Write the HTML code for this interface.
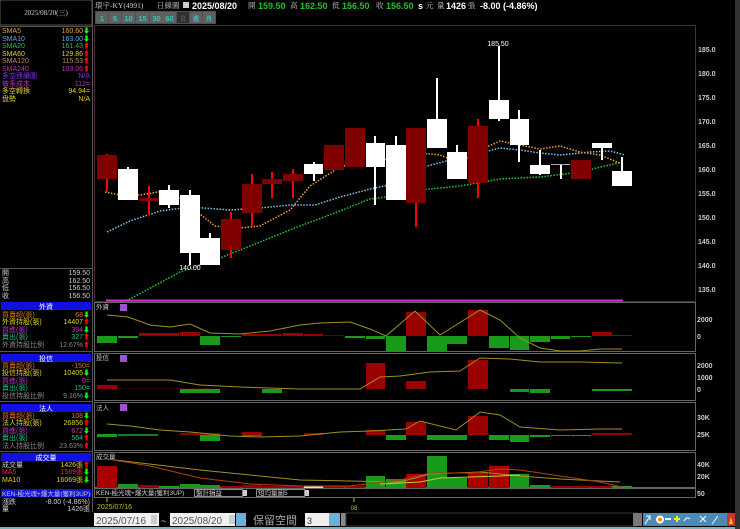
<!DOCTYPE html>
<html><head><meta charset="utf-8"><style>
html,body{margin:0;padding:0;background:#000;width:740px;height:529px;overflow:hidden}
svg{display:block}
text{font-family:"Liberation Sans","Noto Sans CJK TC",sans-serif}
.s{font-family:"Liberation Serif","Noto Serif CJK SC",serif}
</style></head><body>
<svg width="740" height="529" viewBox="0 0 740 529" xmlns="http://www.w3.org/2000/svg">
<rect width="740" height="529" fill="#000"/>
<!-- left panel borders -->
<rect x="0" y="0" width="92" height="25" fill="#000" stroke="#555" stroke-width="1"/>
<text x="46" y="15" font-size="7" fill="#ccc" text-anchor="middle" class="s">2025/08/20(三)</text>
<line x1="92.5" y1="0" x2="92.5" y2="512" stroke="#555"/>
<line x1="0" y1="26.5" x2="92" y2="26.5" stroke="#555"/>
<g font-size="7" class="s">
<text x="2" y="33" fill="#e8a040">SMA5</text><text x="90" y="33" fill="#e8a040" text-anchor="end">160.60<tspan fill="#0f0">⬇</tspan></text>
<text x="2" y="41" fill="#5ab0e0">SMA10</text><text x="90" y="41" fill="#5ab0e0" text-anchor="end">163.00<tspan fill="#0f0">⬇</tspan></text>
<text x="2" y="48" fill="#20c040">SMA20</text><text x="90" y="48" fill="#20c040" text-anchor="end">161.43<tspan fill="#f00">⬆</tspan></text>
<text x="2" y="56" fill="#e0d020">SMA60</text><text x="90" y="56" fill="#e0d020" text-anchor="end">129.86<tspan fill="#f00">⬆</tspan></text>
<text x="2" y="63" fill="#c09060">SMA120</text><text x="90" y="63" fill="#c09060" text-anchor="end">115.53<tspan fill="#f00">⬆</tspan></text>
<text x="2" y="71" fill="#c030c0">SMA240</text><text x="90" y="71" fill="#c030c0" text-anchor="end">103.06<tspan fill="#f00">⬆</tspan></text>
<text x="2" y="78" fill="#8030e0">多空連續圖</text><text x="90" y="78" fill="#8030e0" text-anchor="end">N/A</text>
<text x="2" y="86" fill="#c030c0">做多成本</text><text x="90" y="86" fill="#c030c0" text-anchor="end">112=</text>
<text x="2" y="93" fill="#e0d020">多空轉換</text><text x="90" y="93" fill="#e0d020" text-anchor="end">94.94=</text>
<text x="2" y="101" fill="#e0d020">盘勢</text><text x="90" y="101" fill="#e0d020" text-anchor="end">N/A</text>
</g>
<line x1="0" y1="268.5" x2="92" y2="268.5" stroke="#555"/>
<g font-size="7" fill="#ccc" class="s">
<text x="2" y="275">開</text><text x="90" y="275" text-anchor="end">159.50</text>
<text x="2" y="283">高</text><text x="90" y="283" text-anchor="end">162.50</text>
<text x="2" y="290">低</text><text x="90" y="290" text-anchor="end">156.50</text>
<text x="2" y="298">收</text><text x="90" y="298" text-anchor="end">156.50</text>
</g>
<!-- section headers -->
<g font-size="7" class="s">
<rect x="1" y="302" width="90" height="8" fill="#1010e0"/><text x="46" y="309" fill="#fff" text-anchor="middle">外資</text>
<text x="2" y="317" fill="#e07020">買賣超(張)</text><text x="90" y="317" fill="#e07020" text-anchor="end">68<tspan fill="#0f0">⬇</tspan></text>
<text x="2" y="324" fill="#e0d020">外資持股(張)</text><text x="90" y="324" fill="#e0d020" text-anchor="end">14407<tspan fill="#f00">⬆</tspan></text>
<text x="2" y="332" fill="#c030c0">買進(張)</text><text x="90" y="332" fill="#c030c0" text-anchor="end">394<tspan fill="#0f0">⬇</tspan></text>
<text x="2" y="339" fill="#20c080">賣出(張)</text><text x="90" y="339" fill="#20c080" text-anchor="end">327<tspan fill="#f00">⬆</tspan></text>
<text x="2" y="347" fill="#888">外資持股比例</text><text x="90" y="347" fill="#888" text-anchor="end">12.67%<tspan fill="#f00">⬆</tspan></text>
<line x1="0" y1="351.5" x2="92" y2="351.5" stroke="#555"/>
<rect x="1" y="354" width="90" height="8" fill="#1010e0"/><text x="46" y="361" fill="#fff" text-anchor="middle">投信</text>
<text x="2" y="368" fill="#e07020">買賣超(張)</text><text x="90" y="368" fill="#e07020" text-anchor="end">-150=</text>
<text x="2" y="375" fill="#e0d020">投信持股(張)</text><text x="90" y="375" fill="#e0d020" text-anchor="end">10405<tspan fill="#0f0">⬇</tspan></text>
<text x="2" y="383" fill="#c030c0">買進(張)</text><text x="90" y="383" fill="#c030c0" text-anchor="end">0=</text>
<text x="2" y="390" fill="#20c080">賣出(張)</text><text x="90" y="390" fill="#20c080" text-anchor="end">150=</text>
<text x="2" y="398" fill="#888">投信持股比例</text><text x="90" y="398" fill="#888" text-anchor="end">9.16%<tspan fill="#0f0">⬇</tspan></text>
<line x1="0" y1="401.5" x2="92" y2="401.5" stroke="#555"/>
<rect x="1" y="404" width="90" height="8" fill="#1010e0"/><text x="46" y="411" fill="#fff" text-anchor="middle">法人</text>
<text x="2" y="418" fill="#e07020">買賣超(張)</text><text x="90" y="418" fill="#e07020" text-anchor="end">108<tspan fill="#0f0">⬇</tspan></text>
<text x="2" y="425" fill="#e0d020">法人持股(張)</text><text x="90" y="425" fill="#e0d020" text-anchor="end">26856<tspan fill="#f00">⬆</tspan></text>
<text x="2" y="433" fill="#c030c0">買進(張)</text><text x="90" y="433" fill="#c030c0" text-anchor="end">672<tspan fill="#0f0">⬇</tspan></text>
<text x="2" y="440" fill="#20c080">賣出(張)</text><text x="90" y="440" fill="#20c080" text-anchor="end">564<tspan fill="#f00">⬆</tspan></text>
<text x="2" y="448" fill="#888">法人持股比例</text><text x="90" y="448" fill="#888" text-anchor="end">23.63%<tspan fill="#f00">⬆</tspan></text>
<line x1="0" y1="451.5" x2="92" y2="451.5" stroke="#555"/>
<rect x="1" y="453" width="90" height="8" fill="#1010e0"/><text x="46" y="460" fill="#fff" text-anchor="middle">成交量</text>
<text x="2" y="467" fill="#ccc">成交量</text><text x="90" y="467" fill="#e0d020" text-anchor="end">1426張<tspan fill="#f00">⬆</tspan></text>
<text x="2" y="474" fill="#e03030">MA5</text><text x="90" y="474" fill="#e03030" text-anchor="end">1589張<tspan fill="#0f0">⬇</tspan></text>
<text x="2" y="482" fill="#e0d020">MA10</text><text x="90" y="482" fill="#e0d020" text-anchor="end">16069張<tspan fill="#0f0">⬇</tspan></text>
<rect x="1" y="489" width="90" height="8" fill="#1010e0"/><text x="2" y="496" fill="#ccc" font-size="6.5">KEN-極光魂+爆大量(獲利3UP)</text>
<text x="2" y="504" fill="#ccc">漲跌</text><text x="90" y="504" fill="#ccc" text-anchor="end">-8.00 (-4.86%)</text>
<text x="2" y="511" fill="#ccc">量</text><text x="90" y="511" fill="#ccc" text-anchor="end">1426張</text>
</g>
<!-- top header -->
<g font-size="7.5">
<text x="95" y="8" fill="#ccc" class="s">環宇-KY(4991)</text>
<text x="157" y="8" fill="#ccc" class="s">日線圖</text>
<rect x="183" y="2" width="6" height="6" fill="#ccc"/>
<text x="192" y="9" fill="#fff" font-weight="bold" font-size="9">2025/08/20</text>
<text x="248" y="8" fill="#ccc" class="s">開</text><text x="258" y="9" fill="#20c020" font-weight="bold" font-size="9">159.50</text>
<text x="290" y="8" fill="#ccc" class="s">高</text><text x="300" y="9" fill="#20c020" font-weight="bold" font-size="9">162.50</text>
<text x="332" y="8" fill="#ccc" class="s">低</text><text x="342" y="9" fill="#20c020" font-weight="bold" font-size="9">156.50</text>
<text x="376" y="8" fill="#ccc" class="s">收</text><text x="386" y="9" fill="#20c020" font-weight="bold" font-size="9">156.50</text>
<text x="418" y="9" fill="#fff" font-weight="bold" font-size="9">s</text><text x="426" y="8" fill="#ccc" class="s">元</text>
<text x="437" y="8" fill="#ccc" class="s">量</text><text x="446" y="9" fill="#fff" font-weight="bold" font-size="9">1426</text><text x="468" y="8" fill="#ccc" class="s">張</text>
<text x="480" y="9" fill="#fff" font-weight="bold" font-size="9">-8.00 (-4.86%)</text>
</g>
<!-- period buttons -->
<g font-size="7.5" font-weight="bold" fill="#40c0c0">
<rect x="95" y="11" width="121" height="13" fill="#505050"/>
<rect x="96" y="12" width="12" height="11" fill="#606060"/><text x="102" y="21" text-anchor="middle">1</text>
<rect x="109" y="12" width="12" height="11" fill="#606060"/><text x="115" y="21" text-anchor="middle">5</text>
<rect x="122" y="12" width="13" height="11" fill="#606060"/><text x="128.5" y="21" text-anchor="middle">10</text>
<rect x="136" y="12" width="13" height="11" fill="#606060"/><text x="142.5" y="21" text-anchor="middle">15</text>
<rect x="150" y="12" width="13" height="11" fill="#606060"/><text x="156.5" y="21" text-anchor="middle">30</text>
<rect x="163" y="12" width="13" height="11" fill="#606060"/><text x="169.5" y="21" text-anchor="middle">60</text>
<rect x="177" y="12" width="12" height="11" fill="#303030"/><text x="183" y="21" text-anchor="middle" fill="#555" font-size="6">日</text>
<rect x="190" y="12" width="12" height="11" fill="#606060"/><text x="196" y="21" text-anchor="middle" font-size="6">週</text>
<rect x="203" y="12" width="12" height="11" fill="#606060"/><text x="209" y="21" text-anchor="middle" font-size="6">月</text>
</g>
<!-- main chart frame -->
<rect x="94.5" y="25.5" width="601" height="276" fill="none" stroke="#4a2a3a"/>
<g font-size="7" fill="#ccc" font-weight="bold">
<text x="698" y="52">185.0</text><text x="698" y="76">180.0</text><text x="698" y="100">175.0</text>
<text x="698" y="124">170.0</text><text x="698" y="148">165.0</text><text x="698" y="172">160.0</text>
<text x="698" y="196">155.0</text><text x="698" y="220">150.0</text><text x="698" y="244">145.0</text>
<text x="698" y="268">140.0</text><text x="698" y="292">135.0</text>
</g>
<!-- MA lines -->
<g fill="none" stroke-width="1.5" stroke-dasharray="1.5 1.5">
<polyline stroke="#22cc33" points="120,302 130,299 180,272 220,258 260,242 300,226 340,211 370,199 394,196 420,190 460,186 500,179 540,177 580,172 622,162"/>
<polyline stroke="#7ac8e8" points="107,232 130,221 160,211 190,207 230,210 260,208 290,205 315,205 340,197 370,189 394,184 420,168 450,160 480,153 500,148 520,150 540,153 560,155 590,152 610,151 625,155"/>
<polyline stroke="#f0a030" points="105,192 120,195 140,195 170,190 195,210 215,226 240,228 260,226 290,210 310,186 340,167 370,158 394,160 420,153 440,155 460,163 480,150 500,141 520,145 540,149 560,146 580,152 600,155 622,164"/>
</g>
<!-- candles -->
<g id="c">
<rect x="106" y="154" width="2" height="38" fill="#f00"/><rect x="97" y="155" width="20" height="24" fill="#800000"/>
<rect x="127" y="167" width="2" height="5" fill="#fff"/><rect x="118" y="169" width="20" height="31" fill="#fff"/>
<rect x="148" y="186" width="2" height="29" fill="#f00"/><rect x="139" y="198" width="20" height="3" fill="#800000"/>
<rect x="168" y="185" width="2" height="23" fill="#fff"/><rect x="159" y="190" width="20" height="15" fill="#fff"/>
<rect x="189" y="190" width="2" height="75" fill="#fff"/><rect x="180" y="195" width="20" height="58" fill="#fff"/>
<rect x="209" y="233" width="2" height="6" fill="#fff"/><rect x="200" y="238" width="20" height="27" fill="#fff"/>
<rect x="230" y="212" width="2" height="46" fill="#f00"/><rect x="221" y="219" width="20" height="31" fill="#800000"/>
<rect x="251" y="174" width="2" height="52" fill="#f00"/><rect x="242" y="184" width="20" height="29" fill="#800000"/>
<rect x="271" y="172" width="2" height="26" fill="#f00"/><rect x="262" y="179" width="20" height="5" fill="#800000"/>
<rect x="292" y="169" width="2" height="29" fill="#f00"/><rect x="283" y="174" width="20" height="7" fill="#800000"/>
<rect x="313" y="162" width="2" height="19" fill="#fff"/><rect x="304" y="164" width="19" height="10" fill="#fff"/>
<rect x="324" y="145" width="20" height="25" fill="#800000"/>
<rect x="345" y="128" width="20" height="39" fill="#800000"/>
<rect x="374" y="136" width="2" height="69" fill="#fff"/><rect x="366" y="143" width="19" height="24" fill="#fff"/>
<rect x="395" y="136" width="2" height="10" fill="#fff"/><rect x="386" y="145" width="20" height="55" fill="#fff"/>
<rect x="415" y="200" width="2" height="27" fill="#f00"/><rect x="406" y="128" width="20" height="75" fill="#800000"/>
<rect x="436" y="78" width="2" height="42" fill="#fff"/><rect x="427" y="119" width="20" height="29" fill="#fff"/>
<rect x="456" y="145" width="2" height="8" fill="#fff"/><rect x="447" y="152" width="20" height="27" fill="#fff"/>
<rect x="477" y="119" width="2" height="79" fill="#f00"/><rect x="468" y="126" width="20" height="57" fill="#800000"/>
<rect x="498" y="46" width="2" height="75" fill="#fff"/><rect x="489" y="100" width="20" height="19" fill="#fff"/>
<rect x="518" y="110" width="2" height="52" fill="#fff"/><rect x="510" y="119" width="19" height="26" fill="#fff"/>
<rect x="539" y="150" width="2" height="25" fill="#fff"/><rect x="530" y="165" width="20" height="9" fill="#fff"/>
<rect x="560" y="164" width="2" height="15" fill="#fff"/><rect x="551" y="164" width="19" height="1" fill="#aaa"/>
<rect x="571" y="160" width="20" height="19" fill="#800000"/>
<rect x="601" y="143" width="2" height="17" fill="#fff"/><rect x="592" y="143" width="20" height="5" fill="#fff"/>
<rect x="621" y="157" width="2" height="15" fill="#fff"/><rect x="612" y="171" width="20" height="15" fill="#fff"/>
</g>
<text x="498" y="46" font-size="7" fill="#fff" text-anchor="middle">185.50</text>
<text x="190" y="270" font-size="7" fill="#fff" text-anchor="middle">140.00</text>
<line x1="106" y1="300.5" x2="623" y2="300.5" stroke="#d030d0" stroke-width="2"/>
<!-- subpanels frames -->
<g fill="none" stroke="#666">
<rect x="94.5" y="302.5" width="601" height="49"/>
<rect x="94.5" y="353.5" width="601" height="47"/>
<rect x="94.5" y="402.5" width="601" height="48"/>
<rect x="94.5" y="452.5" width="601" height="35"/>
</g>
<g font-size="6.5" fill="#ccc" class="s">
<text x="96" y="309">外資</text><text x="96" y="360">投信</text><text x="96" y="410">法人</text><text x="96" y="459">成交量</text>
</g>
<g fill="#a050d0"><rect x="120" y="304" width="7" height="7"/><rect x="120" y="355" width="7" height="7"/><rect x="120" y="404" width="7" height="7"/></g>
<g font-size="7" fill="#ccc" font-weight="bold">
<text x="697" y="322">2000</text><text x="697" y="339">0</text>
<text x="697" y="368">2000</text><text x="697" y="380">1000</text><text x="697" y="392">0</text>
<text x="697" y="420">30K</text><text x="697" y="437">25K</text>
<text x="697" y="467">40K</text><text x="697" y="479">20K</text><text x="697" y="496">50</text>
</g>
<!-- foreign bars zero 336 -->
<g>
<rect x="97" y="336" width="20" height="7" fill="#1a9a1a"/><rect x="118" y="336" width="20" height="2" fill="#1a9a1a"/>
<rect x="139" y="333" width="20" height="3" fill="#900"/><rect x="159" y="333" width="20" height="3" fill="#900"/><rect x="180" y="332" width="20" height="4" fill="#900"/>
<rect x="200" y="336" width="20" height="9" fill="#1a9a1a"/><rect x="221" y="336" width="20" height="1" fill="#1a9a1a"/>
<rect x="242" y="334" width="20" height="2" fill="#900"/><rect x="262" y="334" width="20" height="2" fill="#900"/><rect x="283" y="333" width="20" height="3" fill="#900"/><rect x="304" y="334" width="19" height="2" fill="#900"/><rect x="324" y="335" width="20" height="1" fill="#600"/>
<rect x="345" y="336" width="20" height="2" fill="#1a9a1a"/><rect x="366" y="336" width="19" height="3" fill="#1a9a1a"/><rect x="386" y="336" width="20" height="16" fill="#1a9a1a"/>
<rect x="406" y="312" width="20" height="24" fill="#900"/><rect x="427" y="336" width="20" height="16" fill="#1a9a1a"/><rect x="447" y="336" width="20" height="8" fill="#1a9a1a"/>
<rect x="468" y="310" width="20" height="26" fill="#900"/><rect x="489" y="336" width="20" height="12" fill="#1a9a1a"/><rect x="510" y="336" width="19" height="14" fill="#1a9a1a"/>
<rect x="530" y="336" width="20" height="6" fill="#1a9a1a"/><rect x="551" y="336" width="19" height="3" fill="#1a9a1a"/><rect x="571" y="336" width="20" height="1" fill="#1a9a1a"/>
<rect x="592" y="332" width="20" height="4" fill="#900"/><rect x="612" y="335" width="20" height="1" fill="#900"/>
</g>
<polyline fill="none" stroke="#a09020" points="107,315 128,317 150,325 170,327 190,324 210,333 240,334 270,331 300,325 320,323 350,322 370,329 386,336 415,311 440,335 480,310 500,320 520,338 540,348 560,351 580,351 600,349 622,349"/>
<!-- trust bars zero 389 -->
<g>
<rect x="97" y="385" width="20" height="4" fill="#900"/><rect x="118" y="388" width="100" height="1" fill="#300"/>
<rect x="180" y="389" width="40" height="4" fill="#1a9a1a"/><rect x="262" y="389" width="20" height="4" fill="#1a9a1a"/>
<rect x="366" y="363" width="19" height="26" fill="#900"/><rect x="406" y="381" width="20" height="8" fill="#900"/>
<rect x="468" y="360" width="20" height="29" fill="#900"/>
<rect x="510" y="389" width="19" height="3" fill="#1a9a1a"/><rect x="530" y="389" width="20" height="4" fill="#1a9a1a"/>
<rect x="592" y="389" width="40" height="2" fill="#1a9a1a"/>
</g>
<polyline fill="none" stroke="#a09020" points="107,380 170,380 200,385 240,387 300,389 360,389 380,377 400,376 430,372 460,371 480,358 510,359 540,362 580,362 622,363"/>
<!-- institutional bars base 435 -->
<g>
<rect x="97" y="434" width="20" height="3" fill="#1a9a1a"/><rect x="118" y="434" width="40" height="2" fill="#1a7a1a"/>
<rect x="180" y="433" width="40" height="2" fill="#800"/><rect x="242" y="434" width="20" height="2" fill="#1a7a1a"/>
<rect x="200" y="435" width="20" height="6" fill="#1a9a1a"/><rect x="242" y="432" width="20" height="3" fill="#900"/>
<rect x="304" y="433" width="19" height="2" fill="#900"/><rect x="366" y="430" width="19" height="5" fill="#900"/><rect x="386" y="435" width="20" height="5" fill="#1a9a1a"/>
<rect x="406" y="422" width="20" height="13" fill="#900"/><rect x="427" y="435" width="20" height="5" fill="#1a9a1a"/><rect x="447" y="435" width="20" height="5" fill="#1a9a1a"/>
<rect x="468" y="416" width="20" height="19" fill="#900"/><rect x="489" y="435" width="20" height="5" fill="#1a9a1a"/><rect x="510" y="435" width="19" height="7" fill="#1a9a1a"/>
<rect x="530" y="435" width="20" height="2" fill="#1a9a1a"/><rect x="551" y="435" width="19" height="1" fill="#1a9a1a"/><rect x="571" y="435" width="20" height="1" fill="#1a9a1a"/>
<rect x="592" y="433" width="40" height="2" fill="#900"/>
</g>
<polyline fill="none" stroke="#a09020" points="107,424 130,426 160,430 190,432 230,436 260,437 300,436 340,432 370,431 406,429 420,421 456,430 480,412 500,415 520,427 560,430 600,429 622,429"/>
<!-- volume bars base 488 -->
<g>
<rect x="97" y="466" width="20" height="22" fill="#a00"/><rect x="118" y="484" width="20" height="4" fill="#1a9a1a"/>
<rect x="139" y="485" width="20" height="3" fill="#900"/><rect x="159" y="486" width="20" height="2" fill="#1a9a1a"/><rect x="180" y="484" width="20" height="4" fill="#1a9a1a"/>
<rect x="200" y="485" width="20" height="3" fill="#1a9a1a"/><rect x="221" y="486" width="20" height="2" fill="#900"/><rect x="242" y="485" width="20" height="3" fill="#900"/>
<rect x="262" y="486" width="20" height="2" fill="#900"/><rect x="283" y="486" width="20" height="2" fill="#900"/><rect x="304" y="486" width="19" height="2" fill="#ddd"/>
<rect x="324" y="486" width="20" height="2" fill="#900"/><rect x="345" y="486" width="20" height="2" fill="#900"/>
<rect x="366" y="476" width="19" height="12" fill="#1a9a1a"/><rect x="386" y="479" width="20" height="9" fill="#1a9a1a"/>
<rect x="406" y="474" width="20" height="14" fill="#a00"/><rect x="427" y="456" width="20" height="32" fill="#1a9a1a"/><rect x="447" y="478" width="20" height="10" fill="#1a9a1a"/>
<rect x="468" y="472" width="20" height="16" fill="#a00"/><rect x="489" y="466" width="20" height="22" fill="#a00"/><rect x="510" y="474" width="19" height="14" fill="#1a9a1a"/>
<rect x="530" y="485" width="20" height="3" fill="#1a9a1a"/><rect x="551" y="486" width="40" height="2" fill="#900"/><rect x="592" y="486" width="20" height="2" fill="#900"/><rect x="612" y="486" width="20" height="2" fill="#1a9a1a"/>
</g>
<polyline fill="none" stroke="#a09020" points="107,459 200,470 300,480 400,482 430,474 480,472 520,476 560,479 620,482"/>
<polyline fill="none" stroke="#b04010" points="107,459 150,466 200,478 250,484 300,486 350,486 400,480 430,473 470,473 500,469 520,470 560,476 600,482 622,487"/>
<polyline fill="none" stroke="#c0d030" points="380,484 420,482 440,478 470,477 500,476 520,475"/>
<!-- bottom rows -->
<rect x="94.5" y="488.5" width="601" height="9" fill="#000" stroke="#666"/>
<g font-size="6.5" class="s" fill="#ccc">
<text x="96" y="495">KEN-極光魂+爆大量(獲利3UP)</text>
<rect x="194.5" y="489.5" width="48" height="7" fill="#000" stroke="#888"/><text x="196" y="495">盤計損益</text>
<rect x="243" y="490" width="4" height="6" fill="#ccc"/>
<rect x="256.5" y="489.5" width="48" height="7" fill="#000" stroke="#888"/><text x="258" y="495">短均量圖5</text>
<rect x="305" y="490" width="4" height="6" fill="#ccc"/>
</g>
<text x="97" y="509" font-size="7" fill="#c0c020">2025/07/16</text>
<line x1="107" y1="498" x2="107" y2="502" stroke="#c0c020"/>
<text x="354" y="510" font-size="6" fill="#c0c020" text-anchor="middle">08</text>
<line x1="354" y1="498" x2="354" y2="502" stroke="#c0c020"/>
<!-- bottom toolbar -->
<rect x="0" y="512" width="740" height="17" fill="#000"/>
<rect x="0" y="527" width="740" height="2" fill="#7ab0b8"/>
<rect x="735" y="0" width="5" height="529" fill="#333"/>
<g font-size="10" class="s">
<rect x="94" y="513" width="65" height="13" fill="#f0f0f0"/><text x="96" y="524" fill="#555">2025/07/16</text>
<rect x="151" y="515" width="6" height="9" fill="#ccc"/>
<text x="161" y="524" fill="#ccc" font-size="9">~</text>
<rect x="170" y="513" width="65" height="13" fill="#f0f0f0"/><text x="172" y="524" fill="#555">2025/08/20</text>
<rect x="229" y="515" width="6" height="9" fill="#ccc"/>
<rect x="236" y="513" width="10" height="13" fill="#6ab0d8"/>
<text x="253" y="524" fill="#aaa" font-size="11">保留空間</text>
<rect x="305" y="513" width="24" height="13" fill="#f0f0f0"/><text x="307" y="524" fill="#333" font-size="9">3</text>
<rect x="329" y="513" width="11" height="13" fill="#6ab0d8"/>
<rect x="341" y="513" width="5" height="13" fill="#888"/>
<rect x="346" y="513" width="291" height="13" fill="#000" stroke="#333"/>
<rect x="633" y="513" width="9" height="13" fill="#777"/>
</g>
<g>
<rect x="643" y="513" width="84" height="13" fill="#4a8ab8"/>
<circle cx="660" cy="519.5" r="4" fill="#fff"/><circle cx="660" cy="519.5" r="2" fill="#f80"/>
<rect x="665" y="518" width="6" height="2" fill="#fff"/>
<rect x="674" y="518" width="6" height="2" fill="#ff0"/><rect x="676" y="516" width="2" height="6" fill="#ff0"/>
<path d="M645 524 L650 516 M646 516 L650 516 L650 520" stroke="#fff" fill="none"/>
<path d="M684 521 q3 -5 6 -2 M700 516 l6 6 M706 516 l-6 6 M712 524 l6 -8" stroke="#fff" fill="none"/>
<rect x="727" y="513" width="8" height="13" fill="#d03030"/><path d="M729 524 L731 517 L733 524 Z" fill="#fc0"/>
</g>
</svg>
</body></html>
